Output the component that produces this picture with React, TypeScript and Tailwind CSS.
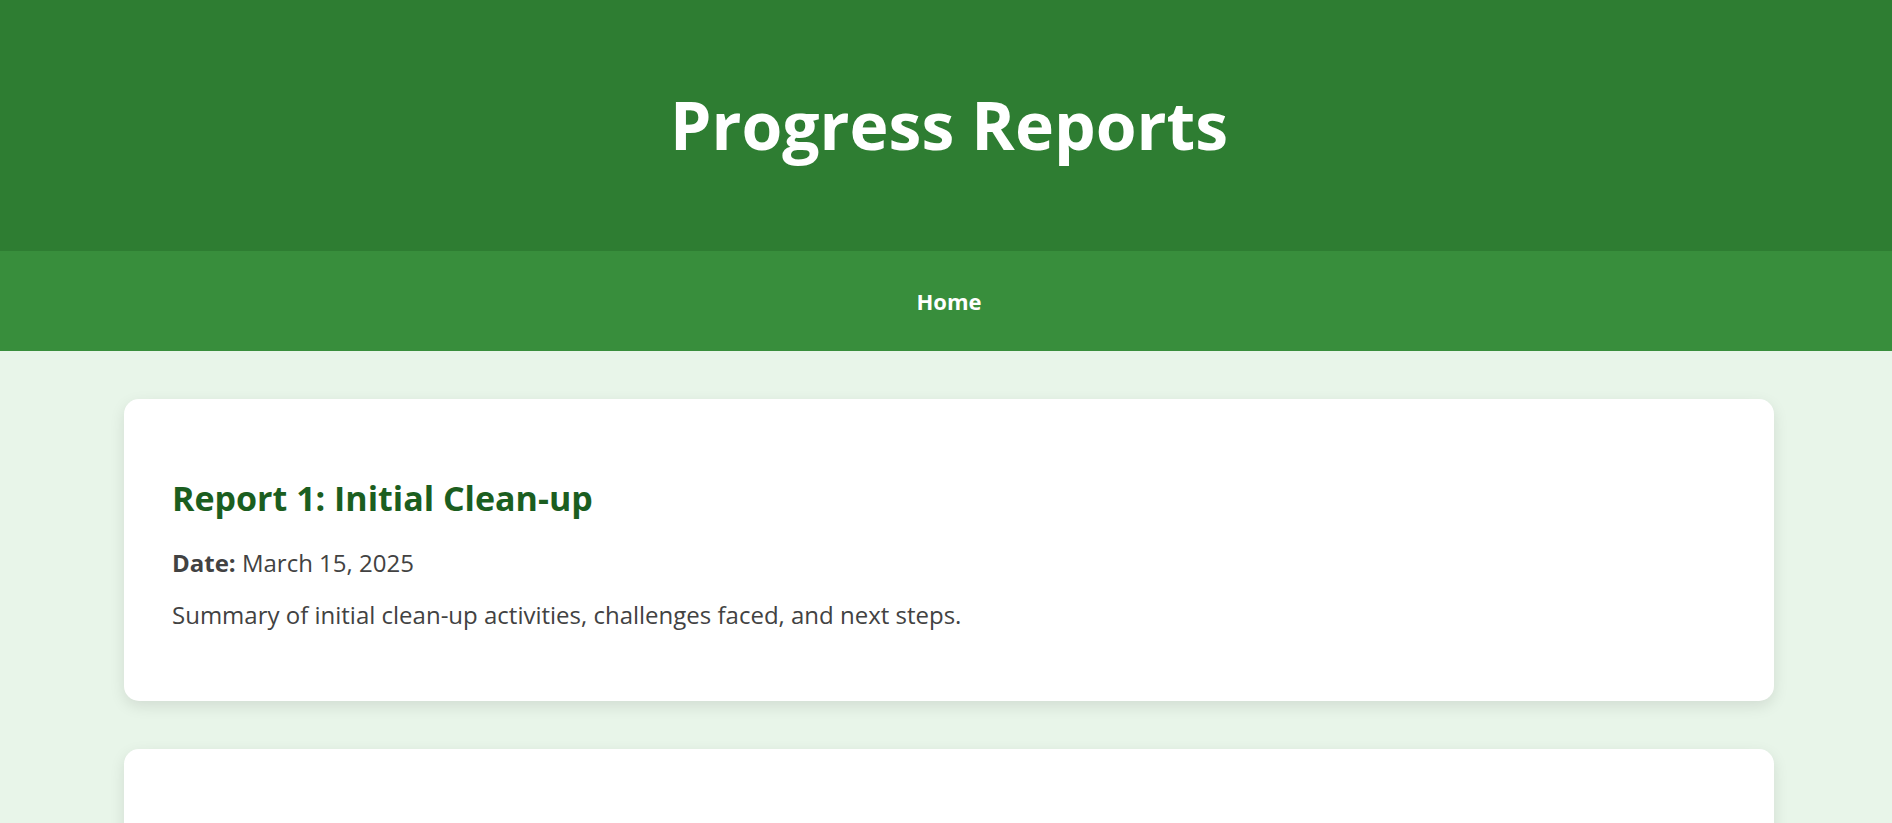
import type { ReactNode } from "react";

function ReportCard({ children }: { children?: ReactNode }) {
  return (
    <article className="min-h-[302px] rounded-[15px] bg-white px-12 pt-[70px] pb-16 shadow-[0_5px_15px_rgba(0,0,0,0.1)]">
      {children}
    </article>
  );
}

export default function App() {
  return (
    <div className="min-h-screen bg-[#e8f5e9] font-['Trebuchet_MS','Open_Sans',sans-serif] text-2xl leading-[38px] text-[#424242]">
      <header className="bg-[#2e7d32] pt-[71px] pb-[73px] pl-1.5 text-center text-white">
        <h1 className="text-[66px] leading-[107px] font-bold">Progress Reports</h1>
      </header>
      <nav className="flex justify-center bg-[#388e3c] py-[31px] pl-1.5">
        <a href="#home" className="text-[22px] font-bold text-white">
          Home
        </a>
      </nav>
      <main className="flex flex-col gap-12 pt-12 pr-[118px] pb-12 pl-[124px]">
        <ReportCard>
          <h2 className="mb-[17px] text-[34px] leading-[58px] font-bold text-[#1b5e20]">
            Report 1: Initial Clean-up
          </h2>
          <p className="mb-3.5">
            <strong className="font-bold">Date:</strong> March 15, 2025
          </p>
          <p>Summary of initial clean-up activities, challenges faced, and next steps.</p>
        </ReportCard>
        <ReportCard />
      </main>
    </div>
  );
}
